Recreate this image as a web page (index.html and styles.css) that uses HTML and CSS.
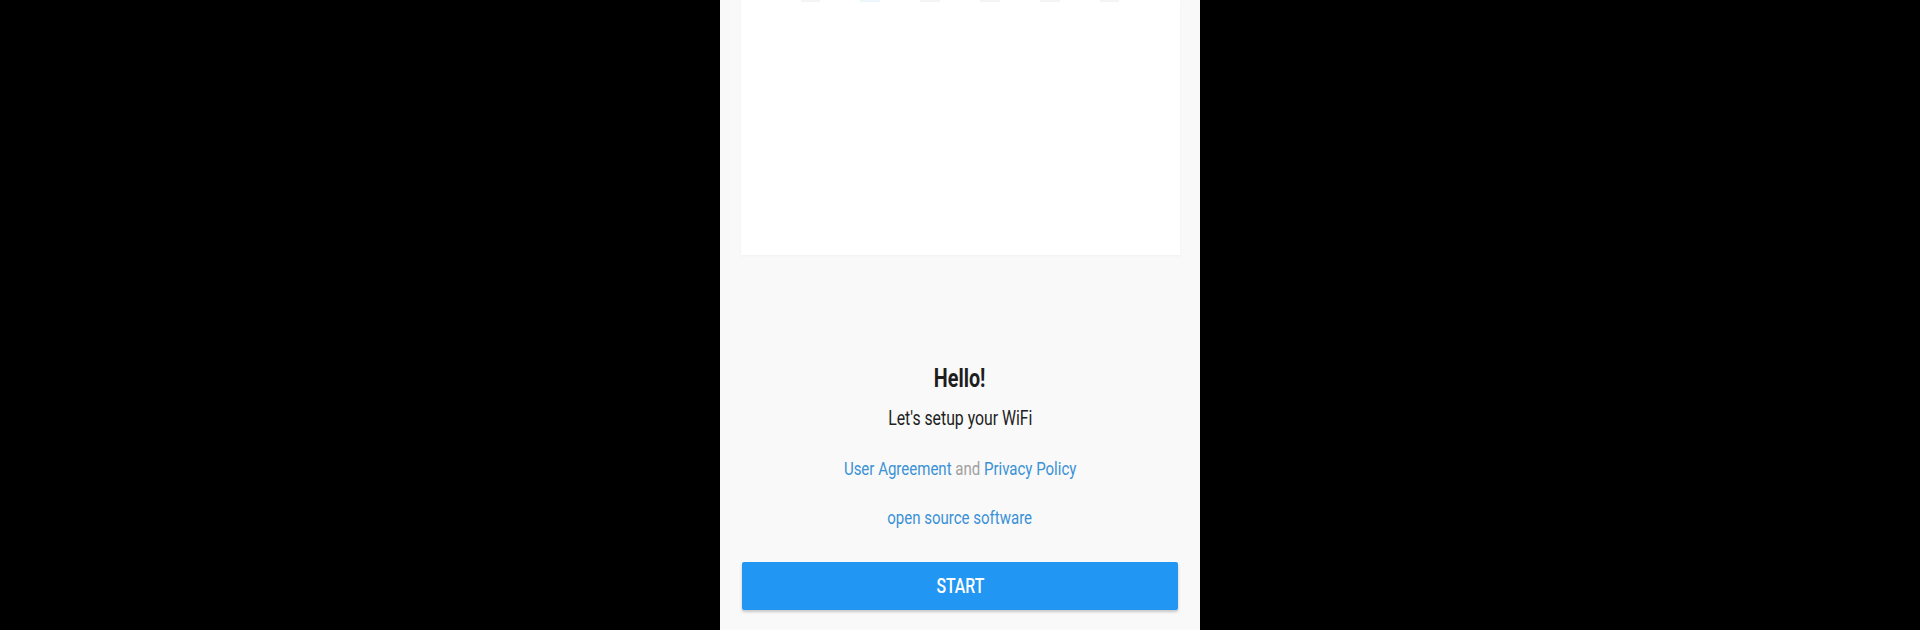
FILE: index.html
```html
<!DOCTYPE html>
<html>
<head>
<meta charset="utf-8">
<link rel="stylesheet" href="styles.css">
</head>
<body>
<div class="phone">
  <div class="card">
    <div class="remnants">
      <span class="r r1"></span><span class="r r2"></span><span class="r r3"></span><span class="r r4"></span><span class="r r5"></span><span class="r r6"></span>
    </div>
  </div>
  <div class="intro">
    <h1 class="title">Hello!</h1>
    <p class="subtitle">Let's setup your WiFi</p>
    <p class="links"><a class="link">User Agreement</a> <span class="and">and</span> <a class="link">Privacy Policy</a></p>
    <p class="links oss"><a class="link">open source software</a></p>
  </div>
  <button class="start"><span class="start-label">START</span></button>
</div>
</body>
</html>
```

FILE: styles.css
```css
html, body {
  margin: 0;
  padding: 0;
  background: #000;
  height: 630px;
  overflow: hidden;
}
body {
  display: flex;
  justify-content: center;
  font-family: Roboto, "Liberation Sans", sans-serif;
}
.phone {
  width: 480px;
  height: 630px;
  background: #f9f9f9;
  display: flex;
  flex-direction: column;
  align-items: center;
}
.card {
  width: 439px;
  height: 255px;
  background: #fff;
  box-shadow: 0 1px 3px rgba(0,0,0,0.04);
  flex-shrink: 0;
}
.remnants {
  display: flex;
  gap: 40px;
  padding: 0 60px;
}
.r {
  display: block;
  height: 2px;
  background: #f4f4f4;
  flex: 1;
}
.r2 { background: #edf6fb; }
.intro {
  display: flex;
  flex-direction: column;
  align-items: center;
  margin-top: 109px;
}
.title, .subtitle, .links, .start-label {
  transform: scaleX(0.79);
}
.title {
  margin: 0;
  font-size: 25px;
  line-height: 30px;
  font-weight: 700;
  color: #1e1e1e;
}
.subtitle {
  margin: 12px 0 0;
  font-size: 20px;
  line-height: 24px;
  color: #212121;
}
.links {
  margin: 27px 0 0;
  font-size: 19px;
  line-height: 24px;
}
.oss { margin-top: 25px; }
.link { color: #3a91d6; }
.and { color: #a0a0a0; }
.start {
  margin-top: 32px;
  width: 436px;
  height: 48px;
  border: none;
  border-radius: 2px;
  background: #2196f3;
  color: #fff;
  font-family: Roboto, "Liberation Sans", sans-serif;
  font-size: 20px;
  font-weight: 500;
  box-shadow: 0 2px 3px rgba(0,0,0,0.2);
  padding: 0;
}
.start-label {
  display: inline-block;
}
```
